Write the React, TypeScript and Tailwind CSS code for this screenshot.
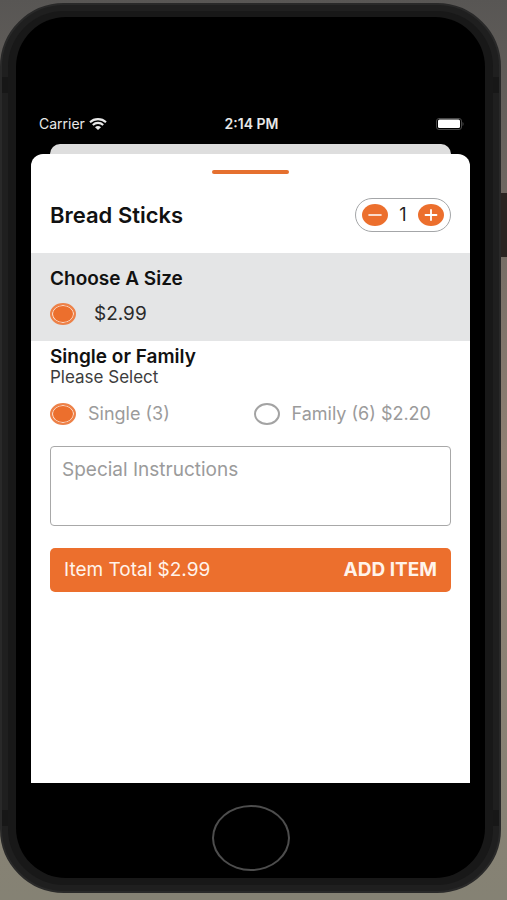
import { useState } from "react";

const RADIO =
  "h-[22px] w-[26px] shrink-0 cursor-pointer appearance-none rounded-[50%] border-2 border-[#a3a3a3] bg-white checked:border-[#ed8148] checked:bg-[#ec6f2d] checked:shadow-[inset_0_0_0_1px_#fbe3d6]";

interface RadioOptionProps {
  name: string;
  label: string;
  checked: boolean;
  onSelect: () => void;
  className?: string;
}

const RadioOption = ({ name, label, checked, onSelect, className = "" }: RadioOptionProps) => {
  return (
    <label className={`flex items-center whitespace-nowrap ${className}`}>
      <input type="radio" name={name} checked={checked} onChange={onSelect} className={RADIO} />
      {label}
    </label>
  );
};

const StatusBar = () => {
  return (
    <div className="grid grid-cols-3 items-center pt-[98px] pr-1.5 pl-2 text-[#e8e8e8]">
      <div className="flex items-center gap-1 text-sm leading-4">
        Carrier
        <svg viewBox="0 0 18 12" className="h-3 w-[18px]" fill="none" stroke="currentColor" strokeWidth="2.1">
          <path d="M1 4.2C5.4 0.1 12.6 0.1 17 4.2" />
          <path d="M3.8 7C6.8 4.2 11.2 4.2 14.2 7" />
          <path d="M6 9.2C7.8 7.7 10.2 7.7 12 9.2L9 12Z" fill="currentColor" stroke="none" />
        </svg>
      </div>
      <div className="text-center text-sm leading-4 font-semibold">2:14 PM</div>
      <svg viewBox="0 0 28 12" className="h-3 w-7 justify-self-end">
        <rect x="0.5" y="0.5" width="25" height="11" rx="2.5" fill="none" stroke="#484848" />
        <rect x="2" y="1.5" width="22" height="8.5" rx="1.5" fill="#fff" />
        <path d="M26.5 4C28 4.8 28 7.2 26.5 8Z" fill="#484848" />
      </svg>
    </div>
  );
};

interface StepperProps {
  value: number;
  onChange: (value: number) => void;
}

const Stepper = ({ value, onChange }: StepperProps) => {
  const buttonClass = "flex h-[22px] w-[26px] items-center justify-center rounded-[50%] bg-[#ec6f2d]";

  return (
    <div className="flex h-[34px] w-24 items-center justify-between rounded-full border border-[#a4a6a8] px-1.5">
      <button
        type="button"
        aria-label="Remove one"
        onClick={() => onChange(Math.max(1, value - 1))}
        className={buttonClass}
      >
        <svg viewBox="0 0 14 12" className="h-3 w-3.5" stroke="#fff" strokeWidth="1.6" strokeLinecap="round">
          <path d="M1 6H13" />
        </svg>
      </button>
      <span className="text-lg leading-5 text-[#222]">{value}</span>
      <button type="button" aria-label="Add one" onClick={() => onChange(value + 1)} className={buttonClass}>
        <svg viewBox="0 0 14 12" className="h-3 w-3.5" stroke="#fff" strokeWidth="1.8" strokeLinecap="round">
          <path d="M1.5 6H12.5M7 1V11" />
        </svg>
      </button>
    </div>
  );
};

const ItemSheet = () => {
  const [quantity, setQuantity] = useState(1);
  const [portion, setPortion] = useState("single");
  const unitPrice = portion === "single" ? 2.99 : 5.19;

  return (
    <main className="flex-1 rounded-t-xl bg-white pt-4 text-[#111]">
      <div className="mx-auto h-1 w-[77px] rounded-full bg-[#e5702f]" />

      <div className="flex items-center justify-between px-[19px] pt-6 pb-[21px]">
        <h1 className="text-[22px] leading-6 font-semibold">Bread Sticks</h1>
        <Stepper value={quantity} onChange={setQuantity} />
      </div>

      <section className="bg-[#e4e5e6] px-[19px] pt-3.5 pb-4">
        <h2 className="text-[19px] leading-6 font-semibold">Choose A Size</h2>
        <RadioOption
          name="size"
          label="$2.99"
          checked
          onSelect={() => {}}
          className="mt-3 h-[22px] gap-[18px] text-[19px] leading-[22px] text-[#2a2a2a]"
        />
      </section>

      <section className="px-[19px] pt-1">
        <h2 className="text-[19px] leading-6 font-semibold">Single or Family</h2>
        <p className="text-[17px] leading-4 text-[#3d3d3d]">Please Select</p>
        <div className="mt-[18px] grid grid-cols-2 text-lg leading-[22px] text-[#9b9b9b]">
          <RadioOption
            name="portion"
            label="Single (3)"
            checked={portion === "single"}
            onSelect={() => setPortion("single")}
            className="gap-3"
          />
          <RadioOption
            name="portion"
            label="Family (6) $2.20"
            checked={portion === "family"}
            onSelect={() => setPortion("family")}
            className="gap-3 pl-[3px]"
          />
        </div>

        <textarea
          aria-label="Special Instructions"
          placeholder="Special Instructions"
          className="mt-[21px] block h-20 w-full resize-none rounded-sm border border-[#a8a8a8] px-[11px] py-[11px] text-[19px] leading-6 placeholder:text-[#9b9b9b]"
        />

        <button
          type="button"
          className="mt-[22px] flex h-11 w-full items-center justify-between rounded-[5px] bg-[#ec6f2d] px-3.5 text-[19px] text-[#fff3ea]"
        >
          <span>Item Total ${(unitPrice * quantity).toFixed(2)}</span>
          <span className="font-bold">ADD ITEM</span>
        </button>
      </section>
    </main>
  );
};

const App = () => {
  return (
    <div className="flex min-h-screen flex-col bg-linear-to-b from-[#585654] via-[#8f8073] to-[#858274] pt-[3px] pr-1.5 pb-[7px] font-['Inter','Liberation_Sans',sans-serif]">
      <div className="relative flex flex-1 flex-col rounded-[64px] border-2 border-[#292929] bg-[#1f1f1f] p-1.5">
        {/* antenna bands and side button */}
        <div className="absolute inset-x-0 top-[72px] h-4 bg-[#171717]" />
        <div className="absolute inset-x-0 bottom-[65px] h-4 bg-[#171717]" />
        <div className="absolute top-[188px] -right-2 h-16 w-1.5 bg-[#2a2421]" />

        <div className="relative flex flex-1 flex-col rounded-[56px] bg-[#181818] px-2 pt-1.5 pb-[7px]">
          <div className="flex flex-1 flex-col rounded-[50px] bg-black px-[15px] pt-px">
            <StatusBar />
            <div className="mx-[19px] mt-3 h-2.5 rounded-t-[10px] bg-[#dedede]" />
            <ItemSheet />
            <div className="flex h-[95px] items-center justify-center">
              <button
                type="button"
                aria-label="Home"
                className="mt-[15px] h-[66px] w-[78px] rounded-[50%] border-2 border-[#4d4d4d]"
              />
            </div>
          </div>
        </div>
      </div>
    </div>
  );
};

export default App;
